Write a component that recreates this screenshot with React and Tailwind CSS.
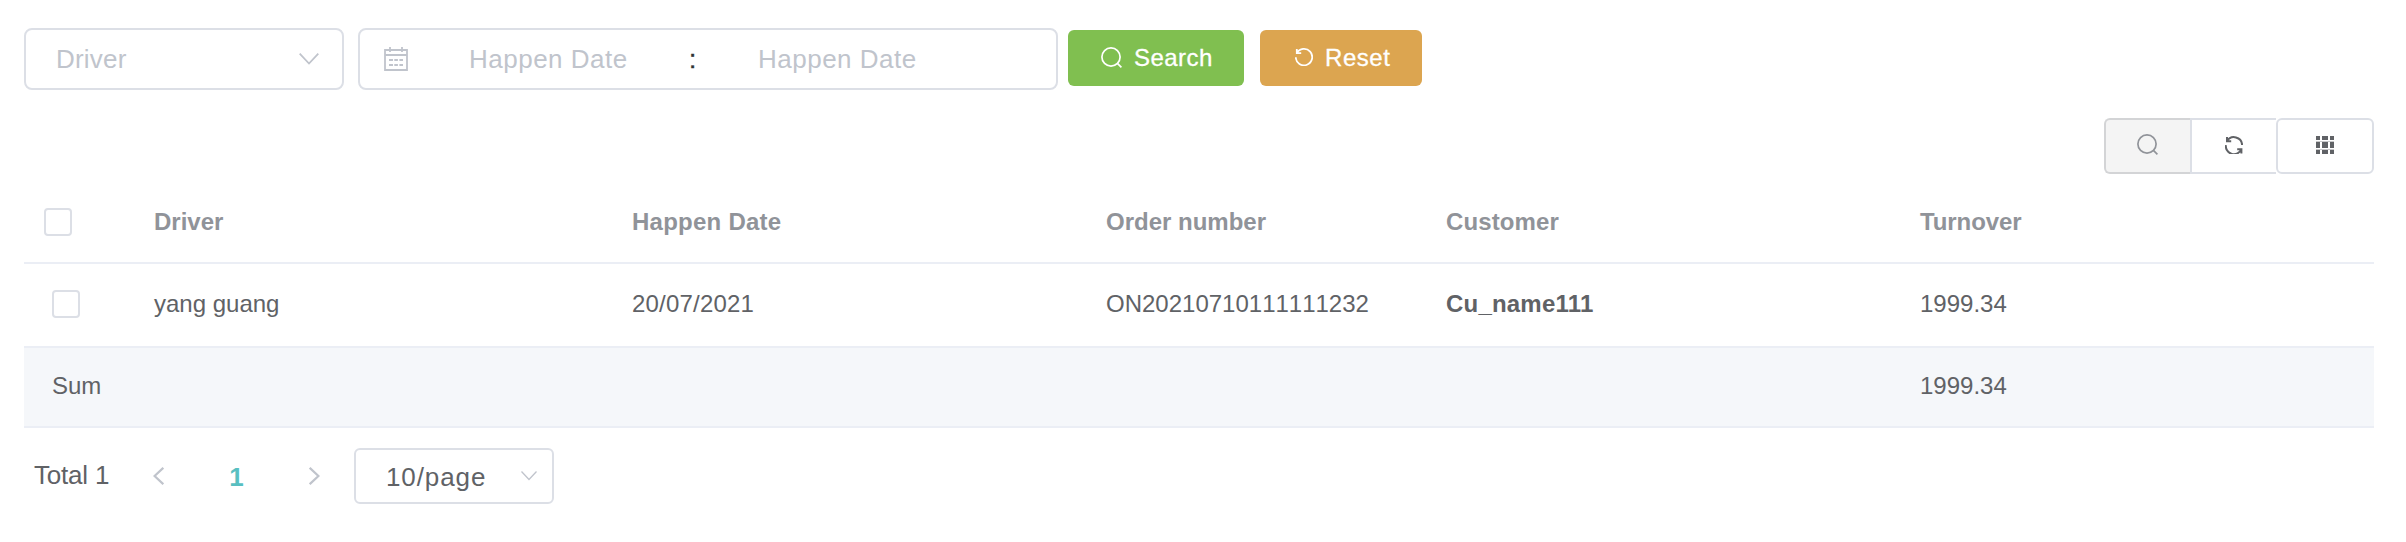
const calendar =
  "M1 3h22v20H1zM1 8h22M6 0v5M18 0v5M5 13h4M10.3 13h3.6M15.4 13h3.6M5 18h4M10.3 18h3.6M15.4 18h3.6";

function Icon({ d, box = "0 0 18 18", width = 1.8, className }) {
  return (
    <svg viewBox={box} fill="none" stroke="currentColor" strokeWidth={width} className={`shrink-0 ${className}`}>
      <path d={d} />
    </svg>
  );
}

function Magnifier({ width = 1.7 }) {
  return (
    <svg viewBox="0 0 21 21" className="h-[21px] w-[21px] shrink-0" fill="none" stroke="currentColor" strokeWidth={width}>
      <circle cx="10" cy="10" r="9.1" />
      <path d="M16.4 16.4l4 4" />
    </svg>
  );
}

const cols = "grid grid-cols-[110px_478px_474px_340px_474px_1fr] items-center";
const cell = "pl-5";

function Box() {
  return <span className="block h-7 w-7 rounded-[4px] border-2 border-[#dcdfe6] bg-white" />;
}

export default function App() {
  return (
    <div className="h-[542px] w-[2406px] overflow-hidden bg-white pl-6 pr-8 pt-7 font-['Liberation_Sans',sans-serif] text-2xl text-[#606266]">
      <div className="flex h-[62px] text-[26px] text-[#c0c4cc]">
        <div className="flex w-80 items-center justify-between rounded-lg border-2 border-[#dcdfe6] pl-[30px] pr-[23px]">
          <span className="tracking-[0.2px]">Driver</span>
          <Icon d="M.7 .7L10 10.5L19.3 .7" box="0 0 20 12" className="h-3 w-5" />
        </div>
        <div className="ml-3.5 flex w-[700px] items-center rounded-lg border-2 border-[#dcdfe6]">
          <Icon d={calendar} box="0 0 24 24" width={1.8} className="mb-px ml-6 h-6 w-6" />
          <span className="ml-[61px] w-[224px] tracking-[0.5px]">Happen Date</span>
          <span className="-ml-1 w-[69px] text-[#303133] [-webkit-text-stroke:0.4px_#303133]">:</span>
          <span className="w-[224px] tracking-[0.5px]">Happen Date</span>
        </div>
        <button className="ml-2.5 mt-0.5 flex h-14 w-44 items-center rounded-md bg-[#80bf50] pl-[33px] text-2xl tracking-[0.45px] text-white">
          <span className="mb-0.5"><Magnifier /></span>
          <span className="ml-3 [-webkit-text-stroke:0.3px_white]">Search</span>
        </button>
        <button className="ml-4 mt-0.5 flex h-14 w-[162px] items-center rounded-md bg-[#dca550] pl-[35px] text-2xl tracking-[0.55px] text-white">
          <Icon d="M1.8 1v4.2h4.4M1.8 5.2A8.2 8.2 0 1 1 .8 9.3" className="mb-0.5 h-[18px] w-[18px]" />
          <span className="ml-3 [-webkit-text-stroke:0.3px_white]">Reset</span>
        </button>
      </div>

      <div className="mt-7 flex h-14 justify-end text-[#606266]">
        <div className="flex w-[86px] items-center justify-center rounded-l-md border-2 border-r-0 border-[#d3d4d6] bg-[#f4f4f4] pb-[3px] pr-px text-[#909399]">
          <Magnifier />
        </div>
        <div className="flex w-[86px] items-center justify-center border-y-2 border-l-2 border-[#dcdfe6] pb-0.5">
          <Icon d="M2 1v4.2h4.2M2 5.2A8.1 8.1 0 0 1 17.1 9M16.4 17.4v-4.2h-4.2M16.4 13.2A8.1 8.1 0 0 1 .9 9" width={2} className="h-[18px] w-[18px]" />
        </div>
        <div className="flex w-[98px] items-center justify-center rounded-md border-2 border-[#dcdfe6] pb-0.5">
          <svg viewBox="0 0 18 18" className="h-[18px] w-[18px]" fill="currentColor">
            <path d="M0 0h4v4H0zM6 0h6v4H6zM14 0h4v4h-4zM0 6h4v6H0zM6 6h6v6H6zM14 6h4v6h-4zM0 14h4v4H0zM6 14h6v4H6zM14 14h4v4h-4z" />
            <path d="M0 5h18v1H0zM0 13h18v1H0z" opacity="0.35" />
          </svg>
        </div>
      </div>

      <div>
        <div className={`${cols} h-[90px] border-b-2 border-[#ebeef5] pt-2 font-bold text-[#909399]`}>
          <div className={cell}><Box /></div>
          <div className={cell}>Driver</div>
          <div className={`${cell} tracking-[0.25px]`}>Happen Date</div>
          <div className={cell}>Order number</div>
          <div className={`${cell} tracking-[0.1px]`}>Customer</div>
          <div className={`${cell} tracking-[-0.1px]`}>Turnover</div>
        </div>
        <div className={`${cols} h-[84px] border-b-2 border-[#ebeef5] pb-0.5`}>
          <div className="pl-7"><Box /></div>
          <div className={cell}>yang guang</div>
          <div className={`${cell} tracking-[0.2px]`}>20/07/2021</div>
          <div className={`${cell} [font-kerning:none]`}>ON20210710111111232</div>
          <div className={`${cell} font-bold tracking-[0.2px]`}>Cu_name111</div>
          <div className={cell}>1999.34</div>
        </div>
        <div className={`${cols} h-20 border-b-2 border-[#ebeef5] bg-[#f5f7fa] pb-0.5`}>
          <div className="pl-7">Sum</div>
          <div /><div /><div /><div />
          <div className={cell}>1999.34</div>
        </div>
      </div>

      <div className="mt-5 flex h-14 items-center text-[26px]">
        <span className="mb-0.5 w-[129px] pl-2.5 tracking-[-0.2px]">Total 1</span>
        <Icon d="M10.3 .8L1.6 9L10.3 17.2" box="0 0 11 18" width={2.2} className="h-[18px] w-[11px] text-[#c0c4cc]" />
        <span className="w-[145px] pt-0.5 text-center font-bold text-[#58bfc1]">1</span>
        <Icon d="M.7 .8L9.4 9L.7 17.2" box="0 0 11 18" width={2.2} className="h-[18px] w-[11px] text-[#c0c4cc]" />
        <div className="ml-[34px] flex h-14 w-[200px] items-center justify-between rounded-md border-2 border-[#dcdfe6] pl-[30px] pr-[15px]">
          <span className="pt-0.5 tracking-[0.9px]">10/page</span>
          <Icon d="M.5 .5L8 8.5L15.5 .5" box="0 0 16 10" width={1.3} className="mb-px h-2.5 w-4 text-[#c0c4cc]" />
        </div>
      </div>
    </div>
  );
}
